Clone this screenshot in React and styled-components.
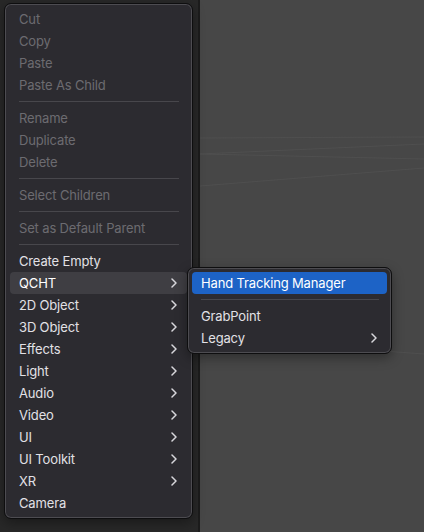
import React from "react";
import styled, { createGlobalStyle } from "styled-components";

const GlobalStyle = createGlobalStyle`
  html, body {
    margin: 0;
    padding: 0;
    background: #282828;
  }
  body {
    font-family: "Inter", "Liberation Sans", sans-serif;
    -webkit-font-smoothing: antialiased;
  }
`;

const Screen = styled.div`
  position: relative;
  display: flex;
  width: 424px;
  height: 532px;
  overflow: hidden;
`;

const Hierarchy = styled.div`
  width: 198px;
  background: #282828;
  border-right: 2px solid #1c1c1c;
`;

const Scene = styled.div`
  flex: 1;
  background: #474747;
  position: relative;
`;

const Grid = styled.svg`
  display: block;
  width: 100%;
  height: 100%;
`;

const Menu = styled.div`
  position: absolute;
  left: ${(p) => p.$x}px;
  top: ${(p) => p.$y}px;
  width: ${(p) => p.$w}px;
  box-sizing: border-box;
  padding: 4px ${(p) => p.$px}px;
  background: #2c2b30;
  border: 1px solid #0e0e0f;
  border-radius: 7px;
  box-shadow: inset 0 0 0 1px #4d4c51, 0 4px 12px rgba(0, 0, 0, 0.35);
`;

const Item = styled.div`
  display: flex;
  align-items: center;
  justify-content: space-between;
  height: 22px;
  padding: 0 10px 0 9px;
  border-radius: 4px;
  font-size: 13px;
  letter-spacing: -0.15px;
  color: ${(p) => (p.$disabled ? "#6c6b70" : p.$active ? "#ffffff" : "#e2e1e6")};
  background: ${(p) =>
    p.$active === "blue" ? "#1d63c6" : p.$active ? "#3f3e43" : "transparent"};
  white-space: nowrap;
`;

const Separator = styled.div`
  height: 1px;
  margin: 5px 8px 5px 9px;
  background: #48474c;
`;

const Chevron = () => (
  <svg width="6" height="10" viewBox="0 0 6 10">
    <path
      d="M1 1 L5 5 L1 9"
      fill="none"
      stroke="#d8d7dc"
      strokeWidth="1.5"
      strokeLinecap="round"
      strokeLinejoin="round"
    />
  </svg>
);

const mainItems = [
  { label: "Cut", disabled: true },
  { label: "Copy", disabled: true },
  { label: "Paste", disabled: true },
  { label: "Paste As Child", disabled: true },
  "sep",
  { label: "Rename", disabled: true },
  { label: "Duplicate", disabled: true },
  { label: "Delete", disabled: true },
  "sep",
  { label: "Select Children", disabled: true },
  "sep",
  { label: "Set as Default Parent", disabled: true },
  "sep",
  { label: "Create Empty" },
  { label: "QCHT", sub: true, active: "gray" },
  { label: "2D Object", sub: true },
  { label: "3D Object", sub: true },
  { label: "Effects", sub: true },
  { label: "Light", sub: true },
  { label: "Audio", sub: true },
  { label: "Video", sub: true },
  { label: "UI", sub: true },
  { label: "UI Toolkit", sub: true },
  { label: "XR", sub: true },
  { label: "Camera" },
];

const subItems = [
  { label: "Hand Tracking Manager", active: "blue" },
  "sep",
  { label: "GrabPoint" },
  { label: "Legacy", sub: true },
];

function renderItems(items) {
  return items.map((it, i) =>
    it === "sep" ? (
      <Separator key={i} />
    ) : (
      <Item key={i} $disabled={it.disabled} $active={it.active}>
        <span>{it.label}</span>
        {it.sub && <Chevron />}
      </Item>
    )
  );
}

export default function App() {
  return (
    <>
      <GlobalStyle />
      <Screen>
        <Hierarchy />
        <Scene>
          <Grid viewBox="0 0 224 532">
            <g stroke="#4f4f4f" strokeWidth="1" fill="none">
              <line x1="0" y1="138" x2="224" y2="137" />
              <line x1="0" y1="154" x2="224" y2="144" />
              <line x1="0" y1="154" x2="224" y2="159" />
              <line x1="0" y1="186" x2="224" y2="168" />
              <line x1="170" y1="350" x2="224" y2="354" />
            </g>
          </Grid>
        </Scene>
        <Menu $x={4} $y={3} $w={189} $px={5}>
          {renderItems(mainItems)}
        </Menu>
        <Menu $x={187} $y={267} $w={205} $px={4}>
          {renderItems(subItems)}
        </Menu>
      </Screen>
    </>
  );
}
